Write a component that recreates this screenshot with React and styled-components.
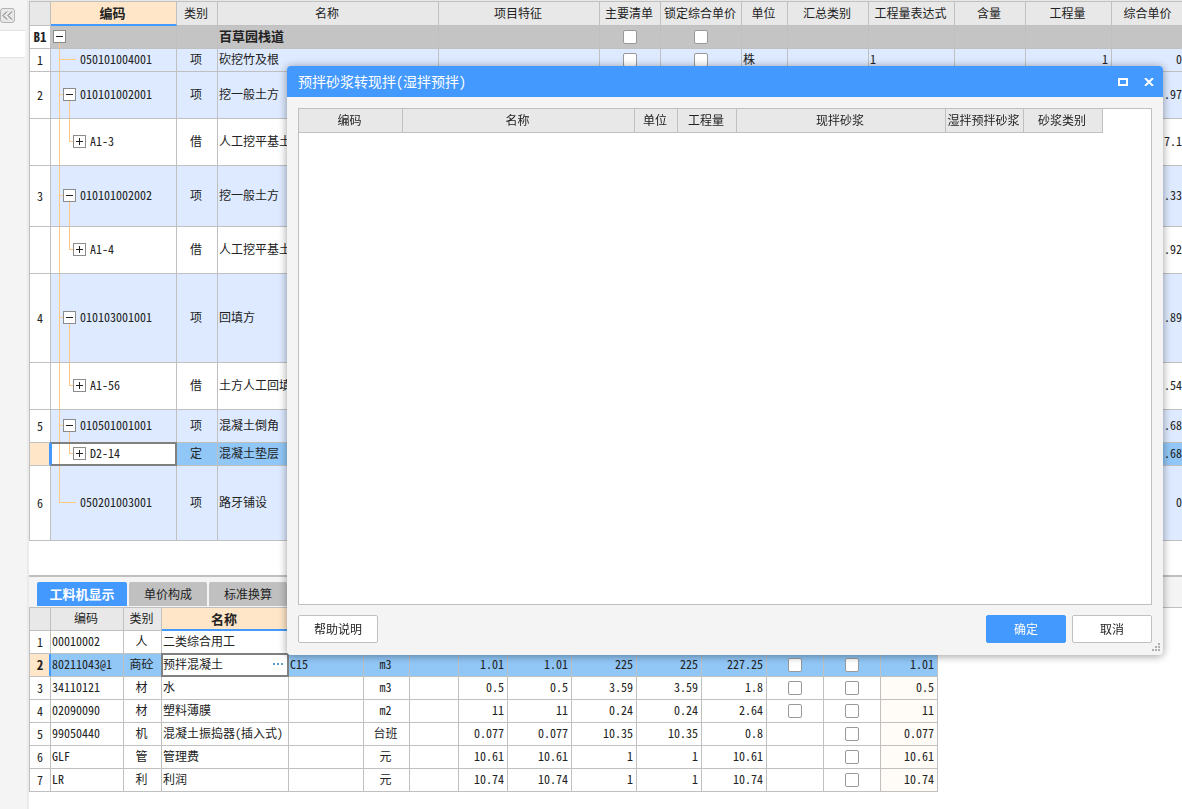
import React from "react";
import styled, { createGlobalStyle, css } from "styled-components";

const LINE = "#c0c0c0";
const BLUE = "#4499ff";
const PEACH = "#ffe6c8";
const TREE = "#ffc884";

const GlobalStyle = createGlobalStyle`
    * {
        box-sizing: border-box;
    }
    body {
        margin: 0;
        overflow: hidden;
        background: #fff;
    }
    body, button, input {
        color: #222;
        font-family: "Noto Sans CJK SC", "Liberation Sans", sans-serif;
        font-feature-settings: "hwid";
        font-size: 12px;
        line-height: 14px;
    }
`;

const Page = styled.div`
    display: flex;
    height: 100vh;
`;

const Sidebar = styled.aside`
    flex: none;
    width: 29px;
    padding-top: 8px;
    background: #f4f4f4;
    border-right: 2px solid #ebebeb;
`;

const CollapseButton = styled.button`
    display: flex;
    align-items: center;
    justify-content: center;
    width: 15px;
    height: 15px;
    padding: 0;
    border: 1px solid #b4b4b4;
    border-radius: 3px;
    background: #e8e8e8;
`;

const SidebarTab = styled.div`
    width: 25px;
    height: 28px;
    margin-top: 7px;
    background: #fff;
    border: solid #e2e2e2;
    border-width: 1px 0;
`;

const Main = styled.main`
    display: flex;
    flex-direction: column;
    flex: 1;
    min-width: 0;
`;

const UpperPane = styled.section`
    flex: 1;
    min-height: 0;
    overflow: hidden;
    border-top: 1px solid #e8e8e8;
`;

const Splitter = styled.div`
    flex: none;
    height: 2px;
    background: ${LINE};
`;

const LowerPane = styled.section`
    flex: none;
    height: 232px;
    overflow: hidden;
`;

const Tabs = styled.div`
    display: flex;
    align-items: flex-end;
    gap: 2px;
    height: 30px;
    padding: 0 8px 1px;
    background: #f4f4f4;
`;

const Tab = styled.button`
    height: 24px;
    width: ${props => (props.$active ? 90 : 78)}px;
    padding: 0;
    border: 0;
    border-radius: 2px 2px 0 0;
    background: ${props => (props.$active ? BLUE : LINE)};
    ${props => props.$active && css`
        color: #fff;
        font-size: 13px;
        font-weight: bold;
    `}
`;

const LowerBody = styled.div`
    border-top: 1px solid ${LINE};
`;

const Grid = styled.table`
    table-layout: fixed;
    width: ${props => props.$width}px;
    border-collapse: separate;
    border-spacing: 0;
    border-left: 1px solid ${LINE};
    border-top: ${props => (props.$top ? `1px solid ${LINE}` : 0)};
`;

const HeadCell = styled.th`
    height: ${props => props.$height}px;
    padding: 0 2px 2px 0;
    border-right: 1px solid ${LINE};
    border-bottom: 1px solid ${LINE};
    background: #e8e8e8;
    font-weight: normal;
    white-space: nowrap;
    overflow: hidden;
    ${props => props.$active && css`
        padding: 0 2px 0 0;
        background: ${PEACH};
        border-bottom: 2px solid ${BLUE};
        font-size: 13px;
        font-weight: bold;
    `}
`;

const rowColors = {
    group: "#c4c4c4",
    item: "#deeaff",
    plain: "#fff",
    selected: "#91c7f7"
};

const Row = styled.tr`
    height: ${props => props.$height}px;
    background: ${props => rowColors[props.$kind]};
`;

const cellPadding = {
    left: "0 1px 2px",
    center: "0 2px 2px 0",
    right: "0 3px 2px 0"
};

const Cell = styled.td`
    padding: ${props => cellPadding[props.$align || "left"]};
    border-right: 1px solid ${LINE};
    border-bottom: 1px solid ${LINE};
    text-align: ${props => props.$align || "left"};
    vertical-align: middle;
    white-space: nowrap;
    overflow: hidden;
    ${props => props.$bold && css`
        font-size: 13px;
        font-weight: bold;
    `}
    ${props => props.$warm && css`
        background: #fffcf7;
    `}
`;

const NumberCell = styled(Cell)`
    padding: 0;
    position: relative;
    overflow: visible;
    text-align: center;
    background: ${props => (props.$current ? PEACH : "#fff")};
    ${props => props.$current && css`
        &::after {
            content: "";
            position: absolute;
            inset: 0 -1px 0 auto;
            width: 2px;
            background: ${BLUE};
        }
    `}
`;

const PlainCell = styled(Cell)`
    padding: 0;
`;

const focusFrame = css`
    position: relative;
    overflow: visible;
    background: #fff;
    &::after {
        content: "";
        position: absolute;
        inset: -1px;
        border: 2px solid #808080;
        pointer-events: none;
    }
`;

const FocusCodeCell = styled(PlainCell)`
    ${focusFrame}
    &::after {
        border-left-color: ${BLUE};
    }
`;

const EditCell = styled(Cell)`
    ${focusFrame}
`;

const EditBox = styled.div`
    display: flex;
    align-items: center;
`;

const EditInput = styled.input`
    flex: 1;
    min-width: 0;
    padding: 0;
    border: 0;
    outline: 0;
    background: transparent;
`;

const MoreButton = styled.button`
    display: flex;
    align-items: center;
    padding: 4px 3px 4px 0;
    border: 0;
    background: transparent;
`;

const paint = `linear-gradient(${TREE}, ${TREE})`;
const middle = "calc(50% - 1px)";

const treeLines = {
    root: `${paint} 8px 100% / 1px 50%`,
    leaf: `${paint} 8px 0 / 1px 100%,
        ${paint} 8px ${middle} / 17px 1px`,
    branch: `${paint} 8px 0 / 1px 100%,
        ${paint} 8px ${middle} / 4px 1px,
        ${paint} 18px 100% / 1px 50%`,
    child: `${paint} 8px 0 / 1px 100%,
        ${paint} 18px 0 / 1px ${middle},
        ${paint} 18px ${middle} / 4px 1px`,
    last: `${paint} 8px 0 / 1px ${middle},
        ${paint} 8px ${middle} / 17px 1px`
};

const treeIndent = { root: 2, leaf: 29, branch: 12, child: 22, last: 29 };

const TreeBox = styled.div`
    display: flex;
    align-items: center;
    gap: 4px;
    height: ${props => props.$height}px;
    margin-bottom: -1px;
    padding: 0 0 2px ${props => treeIndent[props.$tree]}px;
    background: ${props => treeLines[props.$tree]};
    background-repeat: no-repeat;
`;

const Code = styled.span`
    padding-bottom: 2px;
`;

const Toggle = styled.button`
    display: flex;
    width: 13px;
    height: 13px;
    padding: 0;
    border: 1px solid #8c8c8c;
    background: #fff;
`;

const Check = styled.input`
    appearance: none;
    display: block;
    width: 14px;
    height: 14px;
    margin: 0 auto;
    border: 1px solid #999;
    border-radius: 2px;
    background: #fff;
`;

const Dialog = styled.div`
    position: fixed;
    inset: 66px 19px 154px 287px;
    display: flex;
    flex-direction: column;
    border-radius: 4px;
    background: #f4f4f4;
    box-shadow: 0 1px 9px rgba(0, 0, 0, 0.4);
    overflow: hidden;
`;

const TitleBar = styled.header`
    display: flex;
    align-items: center;
    gap: 11px;
    flex: none;
    height: 31px;
    padding: 0 7px 0 11px;
    background: ${BLUE};
    color: #fff;
`;

const Title = styled.h1`
    flex: 1;
    margin: 0;
    padding-bottom: 2px;
    font-size: 14px;
    line-height: 20px;
    font-weight: normal;
`;

const WindowButton = styled.button`
    display: flex;
    align-items: center;
    justify-content: center;
    width: 15px;
    height: 20px;
    padding: 0;
    border: 0;
    background: transparent;
`;

const DialogBody = styled.div`
    flex: 1;
    margin: 11px 11px 0;
    border: 1px solid ${LINE};
    background: #fff;
    overflow: hidden;
`;

const DialogTable = styled(Grid)`
    border-left: 0;
`;

const Footer = styled.footer`
    display: flex;
    gap: 6px;
    padding: 10px 11px 12px;
`;

const Button = styled.button`
    width: 80px;
    height: 28px;
    padding: 0;
    border: 1px solid ${props => (props.$primary ? BLUE : LINE)};
    border-radius: 2px;
    background: ${props => (props.$primary ? BLUE : "#fff")};
    color: ${props => (props.$primary ? "#fff" : "#222")};
`;

const Spacer = styled.div`
    flex: 1;
`;

const Grip = styled.svg`
    position: absolute;
    right: 3px;
    bottom: 4px;
`;

const upperColumns = [
    ["", 21],
    ["编码", 126],
    ["类别", 41],
    ["名称", 221],
    ["项目特征", 161],
    ["主要清单", 61],
    ["锁定综合单价", 81],
    ["单位", 46],
    ["汇总类别", 81],
    ["工程量表达式", 86],
    ["含量", 71],
    ["工程量", 86],
    ["综合单价", 74]
];

const upperRows = [
    { no: "B1", height: 23, kind: "group", tree: "root", code: "", type: "", name: "百草园栈道", open: true, checks: true },
    { no: "1", height: 23, kind: "item", tree: "leaf", code: "050101004001", type: "项", name: "砍挖竹及根", checks: true, unit: "株", expr: "1", qty: "1", price: "0" },
    { no: "2", height: 47, kind: "item", tree: "branch", code: "010101002001", type: "项", name: "挖一般土方", open: true, price: ".97" },
    { no: "", height: 47, kind: "plain", tree: "child", code: "A1-3", type: "借", name: "人工挖平基土", open: false, price: "7.1" },
    { no: "3", height: 61, kind: "item", tree: "branch", code: "010101002002", type: "项", name: "挖一般土方", open: true, price: ".33" },
    { no: "", height: 47, kind: "plain", tree: "child", code: "A1-4", type: "借", name: "人工挖平基土", open: false, price: ".92" },
    { no: "4", height: 89, kind: "item", tree: "branch", code: "010103001001", type: "项", name: "回填方", open: true, price: ".89" },
    { no: "", height: 47, kind: "plain", tree: "child", code: "A1-56", type: "借", name: "土方人工回填", open: false, price: ".54" },
    { no: "5", height: 33, kind: "item", tree: "branch", code: "010501001001", type: "项", name: "混凝土倒角", open: true, price: ".68" },
    { no: "", height: 23, kind: "selected", tree: "child", code: "D2-14", type: "定", name: "混凝土垫层", open: false, price: ".68" },
    { no: "6", height: 75, kind: "item", tree: "last", code: "050201003001", type: "项", name: "路牙铺设", price: "0" }
];

const lowerColumns = [
    ["", 21],
    ["编码", 73],
    ["类别", 38],
    ["名称", 127],
    ["", 75],
    ["", 46],
    ["", 49],
    ["", 49],
    ["", 64],
    ["", 65],
    ["", 65],
    ["", 65],
    ["", 57],
    ["", 57],
    ["", 57]
];

const lowerRows = [
    { code: "00010002", type: "人", name: "二类综合用工", values: ["", "", "", "", ""], total: "" },
    { code: "80211043@1", type: "商砼", name: "预拌混凝土", spec: "C15", unit: "m3", values: ["1.01", "1.01", "225", "225", "227.25"], first: true, second: true, total: "1.01", selected: true },
    { code: "34110121", type: "材", name: "水", unit: "m3", values: ["0.5", "0.5", "3.59", "3.59", "1.8"], first: true, second: true, total: "0.5" },
    { code: "02090090", type: "材", name: "塑料薄膜", unit: "m2", values: ["11", "11", "0.24", "0.24", "2.64"], first: true, second: true, total: "11" },
    { code: "99050440", type: "机", name: "混凝土振捣器(插入式)", unit: "台班", values: ["0.077", "0.077", "10.35", "10.35", "0.8"], second: true, total: "0.077" },
    { code: "GLF", type: "管", name: "管理费", unit: "元", values: ["10.61", "10.61", "1", "1", "10.61"], second: true, total: "10.61" },
    { code: "LR", type: "利", name: "利润", unit: "元", values: ["10.74", "10.74", "1", "1", "10.74"], second: true, total: "10.74" }
];

const dialogColumns = [
    ["编码", 104],
    ["名称", 232],
    ["单位", 43],
    ["工程量", 59],
    ["现拌砂浆", 209],
    ["湿拌预拌砂浆", 78],
    ["砂浆类别", 79]
];

const sum = columns => columns.reduce((total, column) => total + column[1], 0);

const Columns = ({ columns }) => (
    <colgroup>
        {columns.map(([, width], i) => (
            <col key={i} width={width} />
        ))}
    </colgroup>
);

const Head = ({ columns, height, active }) => (
    <thead>
        <tr>
            {columns.map(([label], i) => (
                <HeadCell key={i} $height={height} $active={i === active}>
                    {label}
                </HeadCell>
            ))}
        </tr>
    </thead>
);

const TreeToggle = ({ open }) => (
    <Toggle aria-label={open ? "折叠" : "展开"}>
        <svg width="11" height="11" viewBox="0 0 11 11" fill="#222">
            <rect x="2" y="5" width="7" height="1" />
            {!open && <rect x="5" y="2" width="1" height="7" />}
        </svg>
    </Toggle>
);

const UpperRow = ({ row }) => {
    const CodeCell = row.kind === "selected" ? FocusCodeCell : PlainCell;
    return (
        <Row $height={row.height} $kind={row.kind}>
            <NumberCell $current={row.kind === "selected"} $bold={row.kind === "group"}>
                {row.no}
            </NumberCell>
            <CodeCell>
                <TreeBox $height={row.height} $tree={row.tree}>
                    {row.open !== undefined && <TreeToggle open={row.open} />}
                    <Code>{row.code}</Code>
                </TreeBox>
            </CodeCell>
            <Cell $align="center">{row.type}</Cell>
            <Cell $bold={row.kind === "group"}>{row.name}</Cell>
            <Cell />
            <PlainCell>{row.checks && <Check type="checkbox" aria-label="主要清单" />}</PlainCell>
            <PlainCell>{row.checks && <Check type="checkbox" aria-label="锁定综合单价" />}</PlainCell>
            <Cell>{row.unit}</Cell>
            <Cell />
            <Cell>{row.expr}</Cell>
            <Cell />
            <Cell $align="right">{row.qty}</Cell>
            <Cell $align="right">{row.price}</Cell>
        </Row>
    );
};

const LowerRow = ({ row, no }) => (
    <Row $height={23} $kind={row.selected ? "selected" : "plain"}>
        <NumberCell $current={row.selected} $bold={row.selected}>{no}</NumberCell>
        <Cell>{row.code}</Cell>
        <Cell $align="center">{row.type}</Cell>
        {row.selected ? (
            <EditCell>
                <EditBox>
                    <EditInput aria-label="名称" defaultValue={row.name} />
                    <MoreButton aria-label="更多">
                        <svg width="11" height="3" viewBox="0 0 11 3" fill="#5a9fd4">
                            <rect width="2" height="2" />
                            <rect x="4" width="2" height="2" />
                            <rect x="8" width="2" height="2" />
                        </svg>
                    </MoreButton>
                </EditBox>
            </EditCell>
        ) : (
            <Cell>{row.name}</Cell>
        )}
        <Cell>{row.spec}</Cell>
        <Cell $align="center">{row.unit}</Cell>
        <Cell />
        {row.values.map((value, i) => (
            <Cell key={i} $align="right">{value}</Cell>
        ))}
        <PlainCell>{row.first && <Check type="checkbox" aria-label={`${row.name} 1`} />}</PlainCell>
        <PlainCell>{row.second && <Check type="checkbox" aria-label={`${row.name} 2`} />}</PlainCell>
        <Cell $align="right" $warm={!row.selected}>{row.total}</Cell>
    </Row>
);

const MortarDialog = () => (
    <Dialog role="dialog" aria-labelledby="dialog-title">
        <TitleBar>
            <Title id="dialog-title">预拌砂浆转现拌(湿拌预拌)</Title>
            <WindowButton aria-label="最大化">
                <svg width="10" height="8" viewBox="0 0 10 8">
                    <rect x="1" y="1" width="8" height="6" fill="none" stroke="#fff" strokeWidth="2" />
                </svg>
            </WindowButton>
            <WindowButton aria-label="关闭">
                <svg width="10" height="8" viewBox="0 0 10 8">
                    <path d="M1 0L9 8M9 0L1 8" stroke="#fff" strokeWidth="2" />
                </svg>
            </WindowButton>
        </TitleBar>
        <DialogBody>
            <DialogTable $width={sum(dialogColumns)}>
                <Columns columns={dialogColumns} />
                <Head columns={dialogColumns} height={24} />
            </DialogTable>
        </DialogBody>
        <Footer>
            <Button>帮助说明</Button>
            <Spacer />
            <Button $primary>确定</Button>
            <Button>取消</Button>
        </Footer>
        <Grip width="8" height="8" viewBox="0 0 8 8" fill="#b0b0b0">
            <rect x="6" y="0" width="2" height="2" />
            <rect x="3" y="3" width="2" height="2" />
            <rect x="6" y="3" width="2" height="2" />
            <rect x="0" y="6" width="2" height="2" />
            <rect x="3" y="6" width="2" height="2" />
            <rect x="6" y="6" width="2" height="2" />
        </Grip>
    </Dialog>
);

export default () => (
    <React.Fragment>
        <GlobalStyle />
        <Page>
            <Sidebar>
                <CollapseButton aria-label="收起">
                    <svg width="11" height="9" viewBox="0 0 11 9" fill="none" stroke="#666">
                        <path d="M5 0.5L1 4.5L5 8.5M10 0.5L6 4.5L10 8.5" />
                    </svg>
                </CollapseButton>
                <SidebarTab />
            </Sidebar>
            <Main>
                <UpperPane>
                    <Grid $width={sum(upperColumns) + 1} $top>
                        <Columns columns={upperColumns} />
                        <Head columns={upperColumns} height={24} active={1} />
                        <tbody>
                            {upperRows.map((row, i) => (
                                <UpperRow key={i} row={row} />
                            ))}
                        </tbody>
                    </Grid>
                </UpperPane>
                <Splitter />
                <LowerPane>
                    <Tabs>
                        <Tab $active>工料机显示</Tab>
                        <Tab>单价构成</Tab>
                        <Tab>标准换算</Tab>
                    </Tabs>
                    <LowerBody>
                        <Grid $width={sum(lowerColumns) + 1}>
                            <Columns columns={lowerColumns} />
                            <Head columns={lowerColumns} height={23} active={3} />
                            <tbody>
                                {lowerRows.map((row, i) => (
                                    <LowerRow key={row.code} row={row} no={i + 1} />
                                ))}
                            </tbody>
                        </Grid>
                    </LowerBody>
                </LowerPane>
            </Main>
        </Page>
        <MortarDialog />
    </React.Fragment>
);
